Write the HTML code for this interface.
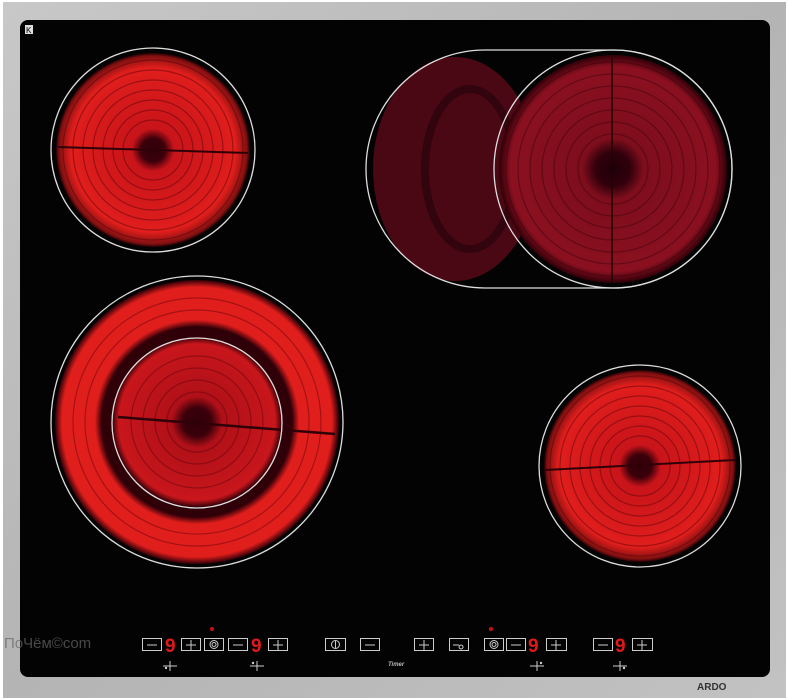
<!DOCTYPE html>
<html><head><meta charset="utf-8"><style>
html,body{margin:0;padding:0;width:788px;height:700px;overflow:hidden;background:#fff}
svg{display:block}
</style></head><body>
<svg width="788" height="700" viewBox="0 0 788 700" xmlns="http://www.w3.org/2000/svg" font-family="Liberation Sans, sans-serif">
<defs>
<linearGradient id="steel" x1="0" y1="0" x2="1" y2="1">
<stop offset="0" stop-color="#c8c8c8"/><stop offset="0.5" stop-color="#b4b4b4"/><stop offset="1" stop-color="#c2c2c2"/>
</linearGradient>
<radialGradient id="hot">
<stop offset="0" stop-color="#300008"/><stop offset="0.12" stop-color="#3a000a"/><stop offset="0.22" stop-color="#c8141a"/><stop offset="0.85" stop-color="#e01e1c"/><stop offset="0.97" stop-color="#801010"/><stop offset="1" stop-color="#200004"/>
</radialGradient>
<radialGradient id="mid">
<stop offset="0" stop-color="#20000a"/><stop offset="0.15" stop-color="#30000c"/><stop offset="0.27" stop-color="#7e0e1c"/><stop offset="0.9" stop-color="#8a1020"/><stop offset="1" stop-color="#300008"/>
</radialGradient>
<radialGradient id="ring" cx="0.5" cy="0.5" r="0.5">
<stop offset="0" stop-color="#300008"/><stop offset="0.1" stop-color="#3a000a"/><stop offset="0.18" stop-color="#b01018"/><stop offset="0.55" stop-color="#c8161c"/><stop offset="0.6" stop-color="#300008"/><stop offset="0.67" stop-color="#300008"/><stop offset="0.72" stop-color="#e01e1c"/><stop offset="0.95" stop-color="#e01e1c"/><stop offset="1" stop-color="#300008"/>
</radialGradient>
</defs>
<rect width="788" height="700" fill="#fff"/>
<rect x="3" y="2" width="783" height="696" fill="url(#steel)"/>
<rect x="20" y="20" width="750" height="657" rx="8" fill="#030303"/>
<rect x="25" y="25" width="8" height="9" fill="#ddd"/><text x="26" y="33" font-size="8" fill="#000">K</text>

<circle cx="153" cy="150" r="97" fill="url(#hot)"/>
<g fill="none" stroke="#400008" stroke-width="1.2" opacity="0.4">
<circle cx="153" cy="150" r="30"/><circle cx="153" cy="150" r="40"/><circle cx="153" cy="150" r="50"/><circle cx="153" cy="150" r="60"/><circle cx="153" cy="150" r="70"/><circle cx="153" cy="150" r="80"/><circle cx="153" cy="150" r="90"/></g>
<line x1="58" y1="147" x2="248" y2="153" stroke="#300008" stroke-width="2"/>
<circle cx="153" cy="150" r="102" fill="none" stroke="#ddd" stroke-width="1.3"/>

<ellipse cx="455" cy="169" rx="82" ry="112" fill="#4a0814"/>
<g fill="none" stroke="#1a0006" stroke-width="8" opacity="0.5"><ellipse cx="470" cy="169" rx="45" ry="80"/></g>
<circle cx="613" cy="169" r="114" fill="url(#mid)"/>
<g fill="none" stroke="#300008" stroke-width="1.2" opacity="0.4">
<circle cx="613" cy="169" r="35"/><circle cx="613" cy="169" r="47"/><circle cx="613" cy="169" r="59"/><circle cx="613" cy="169" r="71"/><circle cx="613" cy="169" r="83"/><circle cx="613" cy="169" r="95"/><circle cx="613" cy="169" r="107"/></g>
<line x1="612" y1="58" x2="612" y2="283" stroke="#200004" stroke-width="1.5"/>
<path d="M485 50 H613 A119 119 0 0 1 613 288 H485 A119 119 0 0 1 485 50 Z" fill="none" stroke="#ddd" stroke-width="1.3"/>
<circle cx="613" cy="169" r="119" fill="none" stroke="#ddd" stroke-width="1.3"/>

<circle cx="197" cy="422" r="142" fill="url(#ring)"/>
<g fill="none" stroke="#500008" stroke-width="1.2" opacity="0.4">
<circle cx="197" cy="422" r="30"/><circle cx="197" cy="422" r="42"/><circle cx="197" cy="422" r="54"/><circle cx="197" cy="422" r="66"/><circle cx="197" cy="422" r="112"/><circle cx="197" cy="422" r="124"/></g>
<line x1="118" y1="417" x2="335" y2="434" stroke="#300008" stroke-width="2.5"/>
<circle cx="197" cy="423" r="85" fill="none" stroke="#ddd" stroke-width="1.3"/>
<circle cx="197" cy="422" r="146" fill="none" stroke="#ddd" stroke-width="1.3"/>

<circle cx="640" cy="466" r="96" fill="url(#hot)"/>
<g fill="none" stroke="#400008" stroke-width="1.2" opacity="0.4">
<circle cx="640" cy="466" r="30"/><circle cx="640" cy="466" r="40"/><circle cx="640" cy="466" r="50"/><circle cx="640" cy="466" r="60"/><circle cx="640" cy="466" r="70"/><circle cx="640" cy="466" r="80"/><circle cx="640" cy="466" r="90"/></g>
<line x1="545" y1="470" x2="735" y2="460" stroke="#300008" stroke-width="2"/>
<circle cx="640" cy="466" r="101" fill="none" stroke="#ddd" stroke-width="1.3"/>

<g fill="none" stroke="#ccc" stroke-width="1">
<rect x="142.5" y="638.5" width="19" height="12"/><rect x="181.5" y="638.5" width="19" height="12"/><rect x="204.5" y="638.5" width="19" height="12"/>
<rect x="228.5" y="638.5" width="19" height="12"/><rect x="268.5" y="638.5" width="19" height="12"/>
<rect x="325.5" y="638.5" width="20" height="12"/><rect x="360.5" y="638.5" width="19" height="12"/>
<rect x="414.5" y="638.5" width="19" height="12"/><rect x="449.5" y="638.5" width="19" height="12"/><rect x="484.5" y="638.5" width="19" height="12"/>
<rect x="506.5" y="638.5" width="19" height="12"/><rect x="546.5" y="638.5" width="20" height="12"/>
<rect x="593.5" y="638.5" width="19" height="12"/><rect x="632.5" y="638.5" width="20" height="12"/>
<path d="M147 645h10M233 645h10M365 645h10M511 645h10M598 645h10"/>
<path d="M186 645h10M191 640v10M273 645h10M278 640v10M419 645h10M424 640v10M551 645h10M556 640v10M637 645h10M642 640v10"/>
<circle cx="214" cy="644.5" r="4"/><circle cx="214" cy="644.5" r="2"/>
<circle cx="494" cy="644.5" r="4"/><circle cx="494" cy="644.5" r="2"/>
<circle cx="335.5" cy="644.5" r="4"/><path d="M335.5 641v7"/>
<path d="M453 645h6M461 645a2 2 0 1 0 0.1 0"/>
<path d="M163 666h14M170 661v10M250 666h14M257 661v10M530 666h14M537 661v10M613 666h14M620 661v10"/>
</g>
<g fill="#e01818" font-weight="bold" font-size="19">
<text x="165" y="652">9</text><text x="251" y="652">9</text><text x="528" y="652">9</text><text x="615" y="652">9</text>
</g>
<circle cx="212" cy="629" r="2" fill="#c81010"/><circle cx="491" cy="629" r="2" fill="#c81010"/>
<g fill="#ccc"><circle cx="166" cy="668" r="1.2"/><circle cx="253" cy="663" r="1.2"/><circle cx="541" cy="663" r="1.2"/><circle cx="624" cy="668" r="1.2"/></g>
<text x="388" y="666" font-size="6" fill="#bbb" font-style="italic" font-weight="bold">Timer</text>
<text x="4" y="648" font-size="15" fill="#666" opacity="0.7" font-family="Liberation Sans, 'DejaVu Sans', sans-serif">ПоЧём©com</text>
<text x="697" y="690" font-size="10" fill="#333" font-weight="bold">ARDO</text>
</svg>
</body></html>
